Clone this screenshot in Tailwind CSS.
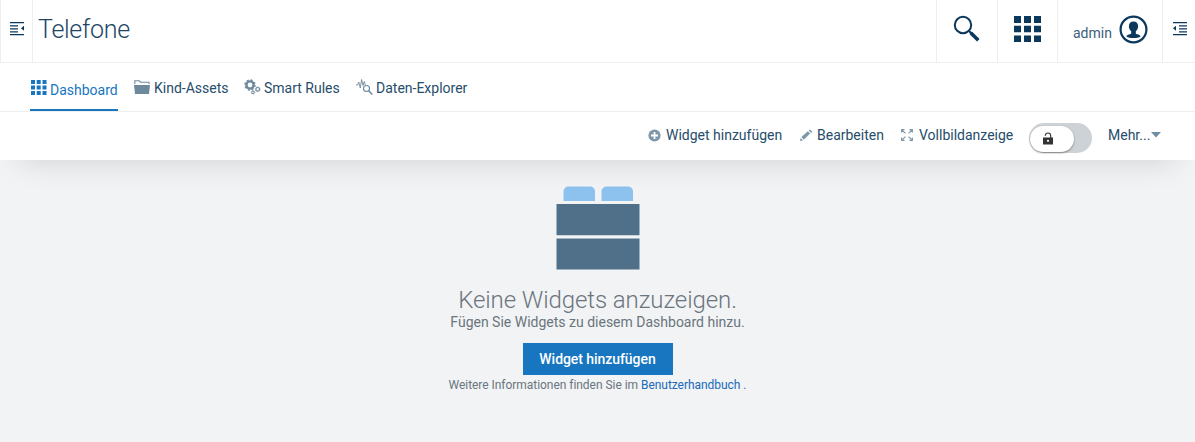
<!DOCTYPE html>
<html lang="de">
<head>
<meta charset="utf-8">
<title>Telefone</title>
<script src="https://cdn.jsdelivr.net/npm/@tailwindcss/browser@4"></script>
</head>
<body class="h-[442px] w-[1195px] overflow-hidden bg-[#f1f3f5] font-['Roboto',sans-serif] text-sm text-[#264d6b]">
<div class="relative z-10 bg-white shadow-[0_20px_30px_-20px_rgba(0,0,0,0.15)]">
  <header class="flex h-[63px] border-b border-[#eeeeee]">
    <button class="flex w-[33px] shrink-0 justify-center border-x border-[#eeeeee] pt-[21px]" aria-label="Navigation">
      <svg class="h-[15px] w-[14px]" viewBox="0 0 14 15" fill="#0b385b"><path d="M0 1h14v1.3H0zM0 4.2h8v1.2H0zM0 7.2h8v1.2H0zM0 10.2h8v1.2H0zM0 13h14v1.3H0zM14 4.8v5L11 7.3z"/></svg>
    </button>
    <h1 class="grow pl-[5px] pt-[13px] text-[25px] font-light leading-[34px] tracking-[-0.3px] text-[#1c4566]"><span>Telefone</span></h1>
    <button class="flex w-[61px] shrink-0 justify-center border-l border-[#eeeeee] pt-[15px]" aria-label="Suche">
      <svg class="h-[28px] w-[28px]" viewBox="0 0 28 28" fill="none" stroke="#0b385b"><circle cx="10" cy="10" r="8.2" stroke-width="2"/><path d="M16 16l2.500 2.500" stroke-width="2"/><path d="M17.700 17.700l7.600 7.600" stroke-width="3.600"/></svg>
    </button>
    <button class="flex w-[60px] shrink-0 justify-center border-l border-[#eeeeee] pt-[16px]" aria-label="Anwendungen">
      <svg class="h-[26px] w-[27px]" viewBox="0 0 27 26" fill="#0b385b"><path d="M0 0h7v7H0zM10 0h7v7h-7zM20 0h7v7h-7zM0 9.700h7v6.600H0zM10 9.700h7v6.600h-7zM20 9.700h7v6.600h-7zM0 19.500h7v6.500H0zM10 19.500h7v6.500h-7zM20 19.500h7v6.500h-7z"/></svg>
    </button>
    <button class="flex w-[105px] shrink-0 border-l border-[#eeeeee] pl-[15px]">
      <span class="w-[46px] pt-[23px] text-left leading-[20px] text-[#3c6079]">admin</span>
      <svg class="mt-[15px] h-[29px] w-[29px]" viewBox="0 0 29 29"><circle cx="14.500" cy="14.500" r="12.900" fill="none" stroke="#0b385b" stroke-width="2.200"/><path fill="#0b385b" d="M14.500 6.500c2.900 0 4.600 1.800 4.600 4.700 0 2-.8 3.600-2.300 5.100v2.100c0 .8 4.400.8 4.800 3.100-3.200 2-10.900 2-14.200 0 .4-2.300 4.800-2.300 4.800-3.100v-2.100c-1.500-1.500-2.300-3.100-2.300-5.100 0-2.900 1.700-4.700 4.600-4.700z"/></svg>
    </button>
    <button class="flex w-[33px] shrink-0 justify-center border-l border-[#eeeeee] pt-[21px] pl-px" aria-label="Seitenleiste">
      <svg class="h-[15px] w-[14px]" viewBox="0 0 14 15" fill="#0b385b"><path d="M0 1h14v1.300H0zM6 4.200h8v1.200H6zM6 7.200h8v1.200H6zM6 10.200h8v1.200H6zM0 13h14v1.300H0zM0 7.300l3-2.500v5z"/></svg>
    </button>
  </header>
  <nav class="flex h-[49px] border-b border-[#eeeeee] pl-[30px]">
    <a class="flex h-[48px] w-[88px] border-b-2 border-[#1776bf] text-[#1776bf]">
      <svg class="ml-px mt-[17px] h-[15px] w-[16px] shrink-0" viewBox="0 0 16 15" fill="currentColor"><path d="M0 0h4v4H0zM5.700 0h4v4h-4zM11.500 0h4v4h-4zM0 5.500h4v4H0zM5.700 5.500h4v4h-4zM11.500 5.500h4v4h-4zM0 11h4v4H0zM5.700 11h4v4h-4zM11.500 11h4v4h-4z"/></svg>
      <span class="ml-[3px] mt-[17px] leading-[20px]">Dashboard</span>
    </a>
    <a class="ml-4 flex w-[95px]">
      <svg class="mt-[17px] h-[15px] w-[16px] shrink-0" viewBox="0 0 16 15" fill="#6f899c"><path d="M0 5h16l-1 9H1z"/><path d="M.8 4V.8h4.500L6.600 2.200H15V4" fill="none" stroke="#6f899c" stroke-width="1.100"/></svg>
      <span class="ml-[4px] mt-[15px] whitespace-nowrap leading-[20px]">Kind-Assets</span>
    </a>
    <a class="ml-[15px] flex w-[97px]">
      <svg class="mt-[16px] h-[16px] w-[17px] shrink-0" viewBox="0 0 17 16" fill="none" stroke="#6f899c"><circle cx="6" cy="6" r="3.600" stroke-width="2.400"/><circle cx="6" cy="6" r="5" stroke-width="1.400" stroke-dasharray="2 1.930"/><circle cx="13.700" cy="10.300" r="1.800" stroke-width="1.200"/><circle cx="13.700" cy="10.300" r="2.500" stroke-width=".6" stroke-dasharray="1 .960"/><circle cx="9" cy="13.300" r="1.300" stroke-width="1"/><circle cx="9" cy="13.300" r="1.900" stroke-width=".6" stroke-dasharray="1 .8"/></svg>
      <span class="ml-[3px] mt-[15px] whitespace-nowrap leading-[20px]">Smart Rules</span>
    </a>
    <a class="ml-[15px] flex">
      <svg class="mt-[16px] h-[16px] w-[17px] shrink-0" viewBox="0 0 17 16" fill="none" stroke="#6f899c"><path d="M0 6h1.500L2.800 3l1.500 6L5.600.5 7 6.500l1.300-4 1 3.500" stroke-width=".9"/><circle cx="10.500" cy="9.500" r="3" stroke-width="1.100"/><path d="M12.700 11.700l3.600 3.700" stroke-width="1.500"/></svg>
      <span class="ml-[3px] mt-[15px] whitespace-nowrap leading-[20px]">Daten-Explorer</span>
    </a>
  </nav>
  <div class="flex h-[48px] justify-end whitespace-nowrap leading-[20px]">
    <button class="flex w-[152px] pt-[13px]">
      <svg class="mr-[5px] mt-[4px] h-[13px] w-[13px]" viewBox="0 0 13 13"><circle cx="6.500" cy="6.500" r="6.100" fill="#7f98a9"/><path d="M6.500 3v7M3 6.500h7" stroke="#fff" stroke-width="1.800"/></svg>
      <span>Widget hinzufügen</span>
    </button>
    <button class="flex w-[101px] pt-[13px]">
      <svg class="mr-[4px] mt-[4px] h-[13px] w-[13px]" viewBox="0 0 13 13" fill="#7f98a9"><path d="M0 12l.6-2.900L3 11.400zM1.400 8.100L7.800 2.300l2.300 2.300-6.300 6.200zM8.700 1.500L10 .4 12.300 2.700 11 3.900z"/></svg>
      <span>Bearbeiten</span>
    </button>
    <button class="flex w-[128px] pt-[13px]">
      <svg class="mr-[6px] mt-[4px] h-[12px] w-[12px]" viewBox="0 0 12 12" fill="none" stroke="#7f98a9" stroke-width="1.100"><path d="M.6 3.500V.6h2.900M8.500.6h2.900v2.900M11.400 8.500v2.900H8.500M3.500 11.400H.6V8.500M1 1l3.400 3.400M11 1L7.600 4.400M11 11L7.600 7.600M1 11l3.400-3.400"/></svg>
      <span>Vollbildanzeige</span>
    </button>
    <button class="mt-[11px] h-[30px] w-[63px] rounded-full bg-[#cdd2d6] p-px pt-[2px]" aria-label="Sperren">
      <span class="flex h-[26px] w-[44px] items-start justify-center rounded-full bg-white pr-[9px] pt-[6px] shadow-[0_1px_2px_rgba(0,0,0,0.4)]">
        <svg class="h-[13px] w-[10px]" viewBox="0 0 10 13"><path d="M2.300 3.800C2.300 1.800 3.400 1 5 1s2.700 1 2.700 2.800V6" fill="none" stroke="#333" stroke-width="1.100"/><path d="M0 5.500h10V12.500H0z" fill="#333"/><circle cx="5" cy="8.800" r="1.100" fill="#fff"/></svg>
      </span>
    </button>
    <button class="ml-4 mr-[33px] flex w-[54px] pt-[13px]">
      <span class="w-[43px] text-left">Mehr...</span>
      <svg class="mt-[7px] h-[6px] w-[10px] shrink-0" viewBox="0 0 10 6" fill="#6f8fa5"><path d="M0 0h10L5 5.500z"/></svg>
    </button>
  </div>
</div>
<main class="flex flex-col items-center pt-[26px] text-[#6b757d]">
  <svg class="h-[84px] w-[84px]" viewBox="0 0 84 84"><path fill="#8dc2ee" d="M7.500 15V5.500a5 5 0 0 1 5-5H34a5 5 0 0 1 5 5V15zM45.500 15V5.500a5 5 0 0 1 5-5H72a5 5 0 0 1 5 5V15z"/><path fill="#50708a" d="M.5 18h83v31.300H.5zM.5 52.500h83v31H.5z"/></svg>
  <h2 class="mt-[14px] whitespace-nowrap text-[24px] font-light leading-[32px] tracking-[-0.08px]"><span>Keine Widgets anzuzeigen.</span></h2>
  <p class="-mt-[4px] whitespace-nowrap leading-[20px]"><span>Fügen Sie Widgets zu diesem Dashboard hinzu.</span></p>
  <button class="mt-[11px] h-[32px] w-[150px] bg-[#1776bf] font-medium leading-[31px] tracking-[-0.06px] text-white">Widget hinzufügen</button>
  <p class="mt-[1px] whitespace-nowrap text-[12px] leading-[18px] tracking-[-0.04px]">Weitere Informationen finden Sie im <a class="text-[#1a6ab8]">Benutzerhandbuch</a> .</p>
</main>
</body>
</html>
